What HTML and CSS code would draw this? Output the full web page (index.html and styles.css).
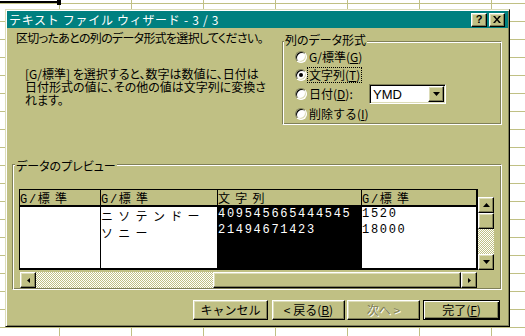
FILE: index.html
```html
<!DOCTYPE html>
<html lang="ja">
<head>
    <meta charset="UTF-8">
    <title>テキスト ファイル ウィザード - 3 / 3</title>
    <link rel="stylesheet" href="styles.css">
</head>
<body>
    <div class="cursor"></div>

    <div class="window">
        <div class="titlebar">
            <span class="title">テキスト ファイル ウィザード - 3 / 3</span>
            <span class="tbtns">
                <span class="tbtn help">?</span>
                <span class="tbtn"><svg width="8" height="7" viewBox="0 0 8 7"><path d="M0 0h2l2 2.4L6 0h2L5 3.5 8 7H6L4 4.6 2 7H0l3-3.5z"/></svg></span>
            </span>
        </div>

        <div class="body">
            <div class="top">
                <div class="intro">
                    <p class="lead">区切ったあとの列のデータ形式を選択してください。</p>
                    <p class="note">[G/標準] を選択すると、数字は数値に、日付は<br>日付形式の値に、その他の値は文字列に変換さ<br>れます。</p>
                </div>

                <div class="group fmt">
                    <span class="legend">列のデータ形式</span>
                    <div class="opt r1"><span class="radio"></span><span class="lbl">G/標準(<span class="u">G</span>)</span></div>
                    <div class="opt r2"><span class="radio on"></span><span class="lbl focus">文字列(<span class="u">T</span>)</span></div>
                    <div class="opt r3">
                        <span class="radio"></span><span class="lbl wide">日付(<span class="u">D</span>):</span>
                        <div class="combo">
                            <span class="combo-val">YMD</span>
                            <span class="drop"><svg width="7" height="4" viewBox="0 0 7 4"><path d="M0 0h7L3.5 4z"/></svg></span>
                        </div>
                    </div>
                    <div class="opt r4"><span class="radio"></span><span class="lbl">削除する(<span class="u">I</span>)</span></div>
                </div>
            </div>

            <div class="group preview">
                <span class="legend">データのプレビュー</span>
                <div class="pv">
                    <div class="table">
                        <div class="th"><span class="num">G/</span><span class="jp">標準</span></div>
                        <div class="th"><span class="num">G/</span><span class="jp">標準</span></div>
                        <div class="th"><span class="jp">文字列</span></div>
                        <div class="th"><span class="num">G/</span><span class="jp">標準</span></div>

                        <div class="td"></div>
                        <div class="td jp"><div>ニソテンドー</div><div>ソニー</div></div>
                        <div class="td sel num"><div>409545665444545</div><div>21494671423</div></div>
                        <div class="td num"><div>1520</div><div>18000</div></div>
                    </div>

                    <div class="vscroll">
                        <span class="sb-btn"><svg width="7" height="4" viewBox="0 0 7 4"><path d="M3.5 0L7 4H0z"/></svg></span>
                        <span class="thumb"></span>
                        <span class="track"></span>
                        <span class="sb-btn"><svg width="7" height="4" viewBox="0 0 7 4"><path d="M0 0h7L3.5 4z"/></svg></span>
                    </div>

                    <div class="hscroll">
                        <span class="sb-btn"><svg width="3" height="5" viewBox="0 0 3 5"><path d="M3 0v5L0 2.5z"/></svg></span>
                        <span class="track"></span>
                        <span class="thumb"></span>
                        <span class="sb-btn"><svg width="3" height="5" viewBox="0 0 3 5"><path d="M0 0v5l3-2.5z"/></svg></span>
                    </div>
                </div>
            </div>

            <div class="buttons">
                <span class="btn cancel">キャンセル</span>
                <span class="btn back">&lt;&nbsp;戻る(<span class="u">B</span>)</span>
                <span class="btn next disabled">次へ&nbsp;&gt;</span>
                <span class="btn finish default">完了(<span class="u">F</span>)</span>
            </div>
        </div>
    </div>
</body>
</html>
```

FILE: styles.css
```css
body {
    margin: 0;
    width: 525px;
    height: 336px;
    overflow: hidden;
    position: relative;
    background-color: #fff;
    background-image:
        linear-gradient(to right, #c0c084 1px, transparent 1px),
        linear-gradient(to bottom, #c0c084 1px, transparent 1px);
    background-size: 72px 18px;
    background-position: 59px 3px;
    font-family: "Noto Sans CJK JP", sans-serif;
    font-size: 12px;
    color: #000;
}

/* selected cell edge of the sheet behind the dialog */
.cursor {
    position: absolute;
    left: 0;
    top: 1px;
    width: 57px;
    height: 2px;
    background: #000;
}
.cursor::after {
    content: "";
    position: absolute;
    left: 57px;
    top: -1px;
    width: 4px;
    height: 5px;
    background: #000;
}

.window {
    position: absolute;
    left: 5px;
    top: 9px;
    width: 505px;
    height: 318px;
    box-sizing: border-box;
    padding: 1px;
    background: #c0c084;
    border: 1px solid;
    border-color: #dcdcb8 #000 #000 #dcdcb8;
    box-shadow: inset 1px 1px #fff, inset -1px -1px #808058;
    display: flex;
    flex-direction: column;
}

.titlebar {
    height: 17px;
    flex: none;
    background: #008080;
    color: #fff;
    display: flex;
    align-items: center;
    justify-content: space-between;
    padding: 0 3px 0 2px;
}
.title {
    white-space: pre;
    line-height: 13px;
    letter-spacing: 0.7px;
}
.tbtns {
    display: flex;
    gap: 2px;
}
.tbtn, .sb-btn, .thumb, .drop, .btn {
    box-sizing: border-box;
    background: #c0c084;
    border: 1px solid;
    border-color: #fff #000 #000 #fff;
    box-shadow: inset -1px -1px #808058, inset 1px 1px #dcdcb8;
}
.tbtn {
    width: 16px;
    height: 14px;
    display: flex;
    align-items: center;
    justify-content: center;
    color: #000;
}
.help {
    font-family: "Liberation Sans", sans-serif;
    font-weight: bold;
    font-size: 11px;
    line-height: 1;
}

.body {
    flex: 1;
    display: flex;
    flex-direction: column;
    padding: 0 6px 5px 5px;
}

.top {
    height: 136px;
    display: flex;
}
.intro {
    flex: 1;
    padding: 3px 0 0 4px;
}
.lead, .note {
    margin: 0;
    line-height: 13px;
    white-space: nowrap;
    font-feature-settings: "palt";
}
.lead {
    letter-spacing: -0.7px;
}
.note {
    margin: 23px 0 0 9px;
}

.group {
    position: relative;
    border: 1px solid;
    border-color: #808058 #fff #fff #808058;
    box-shadow: inset 1px 1px #fff, inset -1px -1px #808058;
}
.legend {
    position: absolute;
    background: #c0c084;
    padding: 0 1px;
    line-height: 13px;
    white-space: nowrap;
    font-feature-settings: "palt";
}

.fmt {
    width: 220px;
    box-sizing: border-box;
    align-self: flex-start;
    margin-top: 13px;
    padding: 5px 0 0 12px;
}
.fmt .legend {
    left: 1px;
    top: -9px;
}
.opt {
    display: flex;
    align-items: center;
    height: 19px;
}
.opt.r2 { height: 18px; }
.opt.r3, .opt.r4 { height: 20px; }

.radio {
    position: relative;
    width: 12px;
    height: 12px;
    box-sizing: border-box;
    border-radius: 50%;
    background: #fff;
    border: 1px solid;
    border-color: #808058 #fff #fff #808058;
    box-shadow: inset 1px 1px #000, inset -1px -1px #dcdcb8;
    margin-right: 1px;
}
.radio.on::after {
    content: "";
    position: absolute;
    left: 3px;
    top: 3px;
    width: 4px;
    height: 4px;
    border-radius: 50%;
    background: #000;
}
.lbl {
    padding: 0 1px;
    line-height: 14px;
    white-space: nowrap;
}
.lbl.focus {
    outline: 1px dotted #000;
}
.lbl.wide {
    width: 60px;
    box-sizing: border-box;
}
.u {
    text-decoration: underline;
}

.combo {
    width: 77px;
    height: 20px;
    margin-left: 1px;
    box-sizing: border-box;
    background: #fff;
    border: 1px solid;
    border-color: #808058 #fff #fff #808058;
    box-shadow: inset 1px 1px #000, inset -1px -1px #dcdcb8;
    display: flex;
    align-items: center;
    padding: 1px 1px 1px 3px;
}
.combo-val {
    flex: 1;
    font-family: "Liberation Sans", sans-serif;
    font-size: 13px;
}
.drop {
    width: 16px;
    height: 16px;
    display: flex;
    align-items: center;
    justify-content: center;
}

.preview {
    padding: 24px 7px 1px 6px;
}
.preview .legend {
    left: 2px;
    top: -6px;
}
.pv {
    display: grid;
    grid-template-columns: 459px 16px;
    grid-template-rows: 81px 16px;
    row-gap: 2px;
}

.table {
    display: grid;
    grid-template-columns: 80px 116px 143px 114px;
    grid-template-rows: 15px 61px;
    column-gap: 1px;
    row-gap: 2px;
    box-sizing: border-box;
    background: #000;
    border: solid #000;
    border-width: 1px 2px 2px 1px;
}
.th, .td {
    white-space: nowrap;
}
.th {
    background: #c0c084;
    line-height: 15px;
}
.td {
    overflow: hidden;
    background: #fff;
    line-height: 17px;
}
.td.sel {
    background: #000;
    color: #fff;
}
.num {
    font-family: "Liberation Mono", monospace;
    letter-spacing: 1.7px;
}
.td.num div {
    margin-top: -1px;
}
.jp {
    letter-spacing: 5.3px;
}

.vscroll {
    margin-top: 8px;
    display: flex;
    flex-direction: column;
}
.sb-btn {
    width: 16px;
    height: 16px;
    flex: none;
    display: flex;
    align-items: center;
    justify-content: center;
}
.vscroll .thumb {
    height: 16px;
    flex: none;
}
.track {
    flex: 1;
    background: repeating-conic-gradient(#fff 0 25%, #c0c084 0 50%) 0 0 / 2px 2px;
}
.hscroll {
    margin: 0 1px;
    display: flex;
}
.hscroll .track {
    flex: none;
    width: 177px;
}
.hscroll .thumb {
    flex: 1;
}

.buttons {
    margin-top: 10px;
    padding-right: 2px;
    display: flex;
    justify-content: flex-end;
}
.btn {
    height: 20px;
    display: flex;
    align-items: center;
    justify-content: center;
    white-space: nowrap;
    line-height: 14px;
}
.cancel { width: 75px; }
.back { width: 73px; margin-left: 4px; }
.next { width: 73px; margin-left: 2px; }
.finish { width: 77px; margin-left: 3px; }
.btn.disabled {
    color: #808058;
    text-shadow: 1px 1px #fff;
}
.btn.default {
    border-color: #000;
    box-shadow: inset 1px 1px #fff, inset -1px -1px #000, inset -2px -2px #808058;
}
```
